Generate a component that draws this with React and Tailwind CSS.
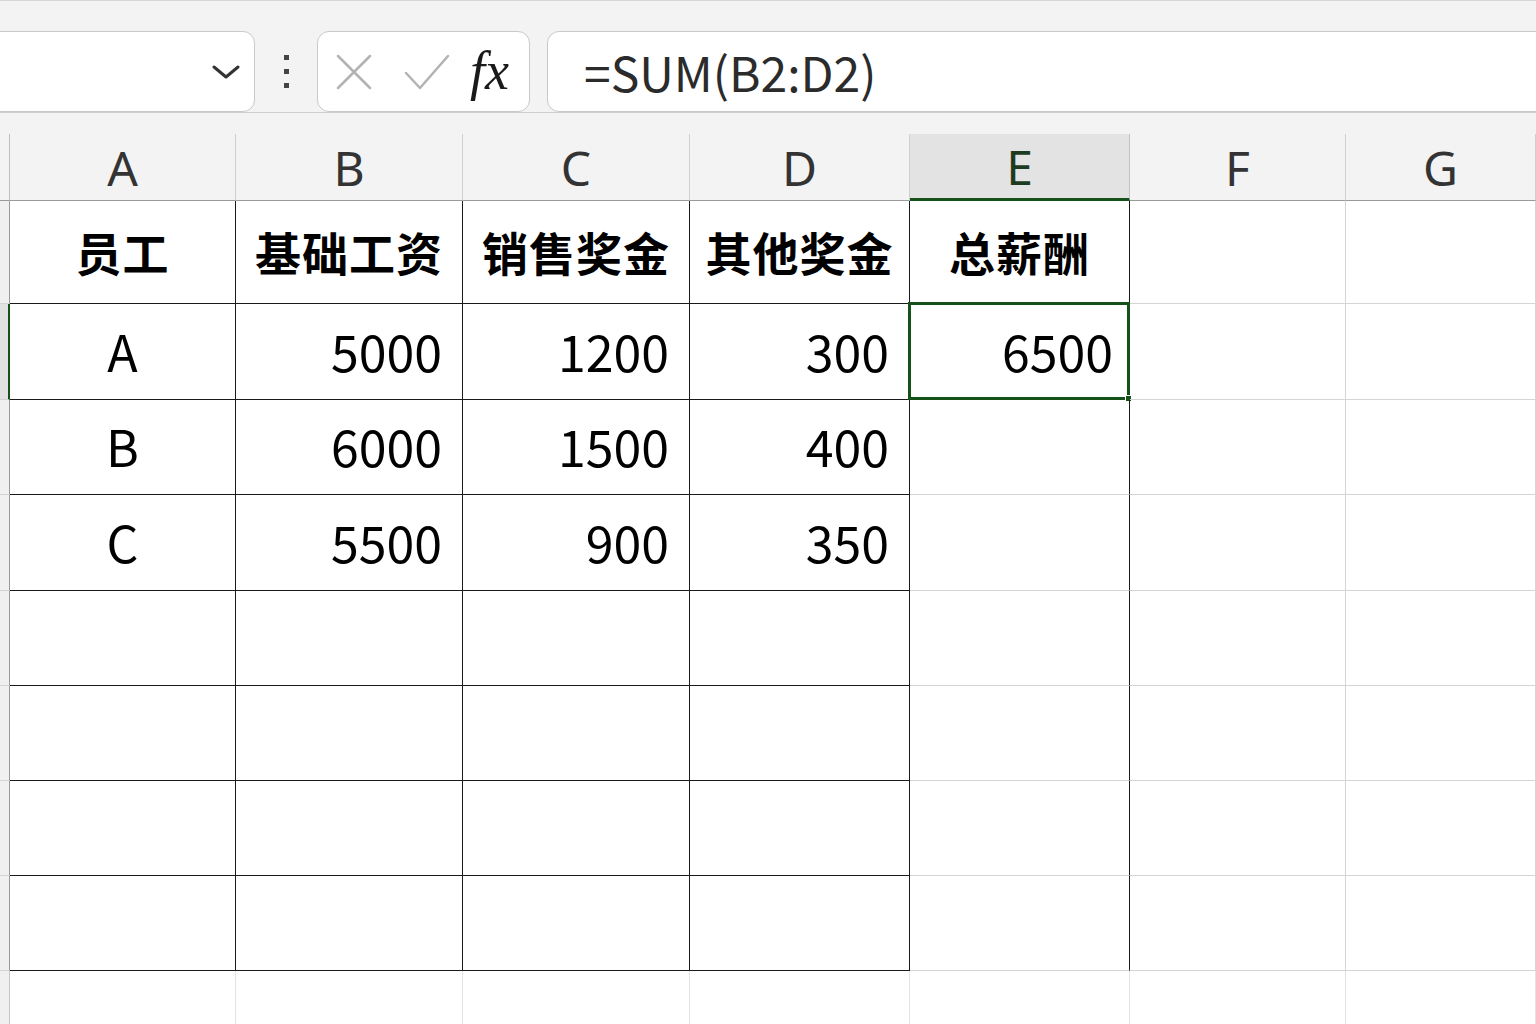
import React from 'react'

const COLS = [
  { key: 'A', w: 'w-[226px]' },
  { key: 'B', w: 'w-[227px]' },
  { key: 'C', w: 'w-[227px]' },
  { key: 'D', w: 'w-[220px]' },
  { key: 'E', w: 'w-[220px]' },
  { key: 'F', w: 'w-[216px]' },
  { key: 'G', w: 'flex-1' },
]

const ROWS = [
  { h: 'h-[103px]', cells: ['员工', '基础工资', '销售奖金', '其他奖金', '总薪酬'], head: true },
  { h: 'h-[96px]', cells: ['A', '5000', '1200', '300', '6500'], selected: true },
  { h: 'h-[95px]', cells: ['B', '6000', '1500', '400', ''] },
  { h: 'h-[96px]', cells: ['C', '5500', '900', '350', ''] },
  { h: 'h-[95px]', cells: [] },
  { h: 'h-[95px]', cells: [] },
  { h: 'h-[95px]', cells: [] },
  { h: 'h-[95px]', cells: [] },
]

const cellFont = { fontFamily: '"Noto Sans CJK SC", "Noto Sans", sans-serif' }

function borderFor(ci) {
  // table A:D has black grid, E has black right edge, F/G normal gridlines
  if (ci <= 3) return 'border-r border-b border-r-[#1a1a1a] border-b-[#1a1a1a]'
  if (ci === 4) return 'border-r border-b border-r-[#1a1a1a] border-b-[#d4d4d4]'
  return 'border-r border-b border-[#d4d4d4]'
}

function Toolbar() {
  return (
    <div className="h-[113px] bg-[#f3f3f3] border-t border-t-[#d6d6d6] border-b border-b-[#cfcfcf] flex items-start pt-[30px] overflow-hidden">
      {/* name box */}
      <div className="-ml-[20px] w-[275px] h-[81px] shrink-0 bg-white border border-[#c9c9c9] rounded-[12px] flex items-center justify-end pr-[14px]">
        <svg width="28" height="16" viewBox="0 0 28 16" fill="none">
          <path d="M2 3 L14 13 L26 3" stroke="#333" strokeWidth="3" strokeLinecap="round" strokeLinejoin="round" />
        </svg>
      </div>
      {/* dots */}
      <div className="w-[62px] h-[81px] shrink-0 flex flex-col items-center justify-center gap-[9px]">
        <div className="w-[5px] h-[5px] bg-[#444]" />
        <div className="w-[5px] h-[5px] bg-[#444]" />
        <div className="w-[5px] h-[5px] bg-[#444]" />
      </div>
      {/* cancel / enter / fx */}
      <div className="w-[213px] h-[81px] shrink-0 bg-white border border-[#c9c9c9] rounded-[12px] flex items-center pl-[18px] gap-[32px]">
        <svg width="36" height="36" viewBox="0 0 36 36" fill="none">
          <path d="M2 2 L34 34 M34 2 L2 34" stroke="#b3b3b3" strokeWidth="2.5" strokeLinecap="round" />
        </svg>
        <svg width="46" height="36" viewBox="0 0 46 36" fill="none" className="ml-[0px]">
          <path d="M2 19 L16 34 L44 2" stroke="#b3b3b3" strokeWidth="2.5" strokeLinecap="round" strokeLinejoin="round" />
        </svg>
        <span
          className="-ml-[12px] text-[54px] italic leading-none text-[#1a1a1a] pb-[2px]"
          style={{ fontFamily: '"Liberation Serif", "DejaVu Serif", serif' }}
        >
          fx
        </span>
      </div>
      {/* formula bar */}
      <div className="ml-[17px] flex-1 -mr-[20px] h-[81px] bg-white border border-[#c9c9c9] rounded-[12px] flex items-center pl-[36px]">
        <span className="text-[48px] leading-none text-[#2b2b2b] pb-[2px]" style={cellFont}>
          =SUM(B2:D2)
        </span>
      </div>
    </div>
  )
}

function ColumnHeaders() {
  return (
    <div>
      <div className="h-[21px] bg-[#f3f3f3]" />
      <div className="flex h-[67px] bg-[#f3f3f3]">
        <div className="w-[10px] shrink-0 border-r border-r-[#bdbdbd] border-b border-b-[#9a9a9a]" />
        {COLS.map((c) => (
          <div
            key={c.key}
            className={`${c.w} shrink-0 flex items-center justify-center text-[48px] leading-none ${
              c.key === 'E'
                ? 'bg-[#e3e3e3] border-r border-r-[#c4c4c4] border-b-[3px] border-b-[#15521a] text-[#1f3b1f]'
                : 'border-r border-r-[#cfcfcf] border-b border-b-[#9a9a9a] text-[#333]'
            }`}
            style={{ fontFamily: '"Noto Sans", "Open Sans", sans-serif' }}
          >
            <span className="pt-[2px]">{c.key}</span>
          </div>
        ))}
      </div>
    </div>
  )
}

function Row({ row }) {
  return (
    <div className={`flex ${row.h}`}>
      <div
        className={`w-[10px] shrink-0 border-b border-b-[#d4d4d4] ${
          row.selected ? 'bg-[#e2e2e2] border-r-2 border-r-[#15521a]' : 'bg-[#f0f0f0] border-r border-r-[#9a9a9a]'
        }`}
      />
      {COLS.map((c, ci) => {
        const text = row.cells[ci] || ''
        const isText = row.head || ci === 0
        const isSel = row.selected && ci === 4
        return (
          <div
            key={c.key}
            className={`${c.w} shrink-0 relative flex items-center ${borderFor(ci)} ${
              isText ? 'justify-center' : 'justify-end'
            } ${isSel ? 'pr-[16px]' : isText ? '' : 'pr-[20px]'}`}
            style={cellFont}
          >
            <span
              className={`leading-none text-black ${
                row.head ? 'text-[46px] font-bold tracking-[1px] pb-[2px]' : 'text-[50px] pb-[4px]'
              }`}
            >
              {text}
            </span>
            {isSel && (
              <div className="absolute -left-[2px] -top-[2px] -right-[1px] -bottom-[1px] border-[3px] border-[#15521a]">
                <div className="absolute -right-[5px] -bottom-[5px] w-[7px] h-[7px] bg-[#15521a] border border-white" />
              </div>
            )}
          </div>
        )
      })}
    </div>
  )
}

export default function App() {
  return (
    <div className="w-[1536px] h-[1024px] overflow-hidden bg-white">
      <Toolbar />
      <ColumnHeaders />
      {ROWS.map((r, i) => (
        <Row key={i} row={r} />
      ))}
      {/* trailing empty row */}
      <div className="flex h-[60px]">
        <div className="w-[10px] shrink-0 bg-[#f0f0f0] border-r border-r-[#c4c4c4]" />
        {COLS.map((c) => (
          <div key={c.key} className={`${c.w} shrink-0 border-r border-r-[#e3e3e3]`} />
        ))}
      </div>
    </div>
  )
}
